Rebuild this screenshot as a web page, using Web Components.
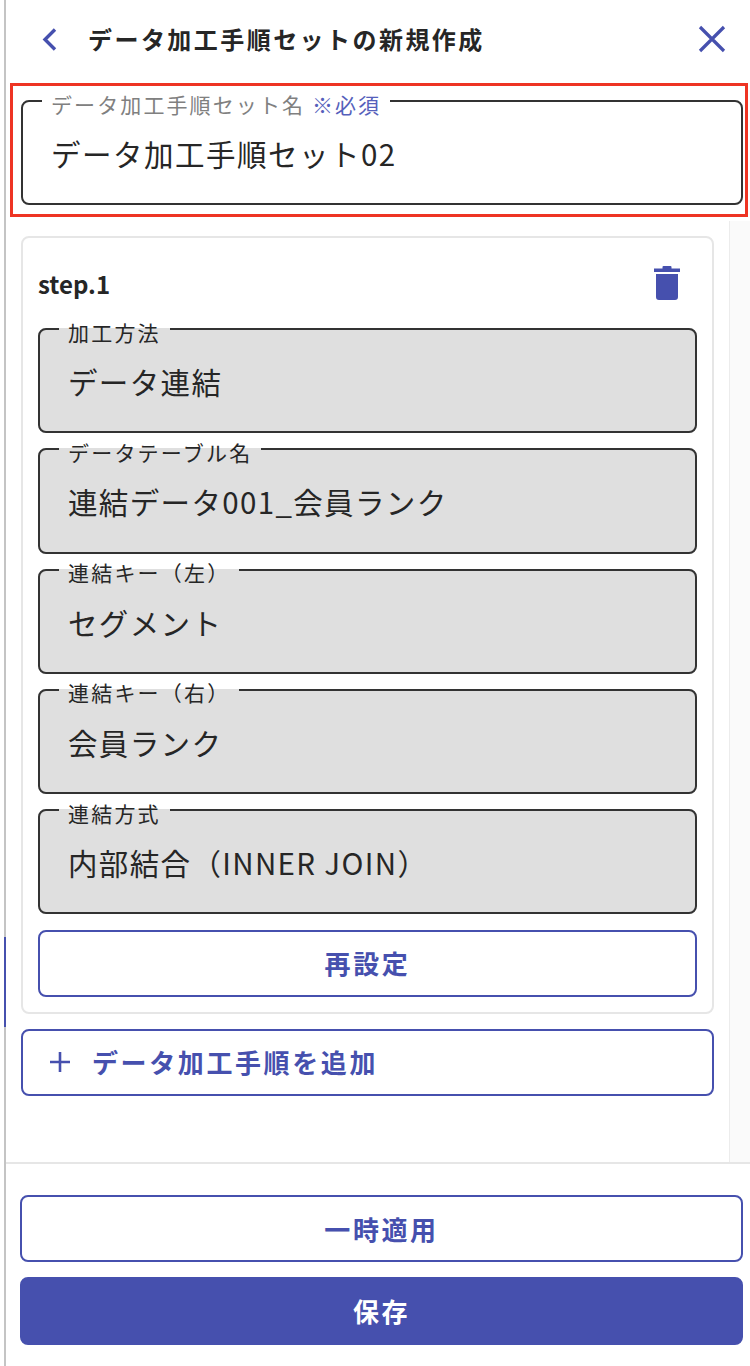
<!DOCTYPE html>
<html lang="ja">
<head>
<meta charset="utf-8">
<title>データ加工手順セットの新規作成</title>
<style>
  html, body { margin: 0; height: 100%; background: #fff; }
  body { font-family: "Noto Sans CJK JP", "Noto Sans", sans-serif; color: #262626; }
</style>
</head>
<body>
<template id="panel-tpl">
  <style>
    :host { display: flex; flex-direction: column; height: 1366px; width: 750px; box-sizing: border-box; overflow: hidden; }
    .edge { position: absolute; left: 4px; top: 0; bottom: 0; width: 1.5px; background: #c4c4c4; }
    .edge i { position: absolute; left: 0; top: 937px; width: 1.5px; height: 90px; background: #4650ae; }
    .head { flex: none; height: 83px; box-sizing: border-box; }
    .body { flex: 1; min-height: 0; display: flex; }
    .scroll { flex: 1; min-width: 0; padding: 19.500px 15px 0 21px; display: flex; flex-direction: column; gap: 15px; }
    .track { flex: none; width: 20px; margin-top: 4px; background: #fafafa; border-left: 1.5px solid #ececec; }
    .foot { flex: none; height: 204px; box-sizing: border-box; margin-left: 5px; border-top: 2px solid #e6e6e6; padding: 31px 7px 0 15px; display: flex; flex-direction: column; gap: 15px; }
    .top { flex: none; padding: 0 2px 0 10px; }
  </style>
  <div class="edge"><i></i></div>
  <div class="head"><slot name="head"></slot></div>
  <div class="top"><slot name="top"></slot></div>
  <div class="body">
    <div class="scroll"><slot></slot></div>
    <div class="track"></div>
  </div>
  <div class="foot"><slot name="foot"></slot></div>
</template>

<template id="head-tpl">
  <style>
    :host { display: flex; align-items: center; height: 78px; padding: 0 24px 0 41px; color: #4650ae; }
    .title { flex: 1; margin-left: 29px; font-size: 24px; font-weight: 700; letter-spacing: 2.450px; color: #262626; white-space: nowrap; line-height: 1; }
    svg { display: block; flex: none; }
  </style>
  <svg width="18" height="24" viewBox="0 0 18 24"><path d="M14 2.500 4 12.500 14 22.500" fill="none" stroke="currentColor" stroke-width="3.400"/></svg>
  <span class="title"><slot></slot></span>
  <svg width="28" height="28" viewBox="0 0 28 28"><path d="M2 2 26 26M26 2 2 26" fill="none" stroke="currentColor" stroke-width="3.200"/></svg>
</template>

<template id="highlight-tpl">
  <style>
    :host { display: block; height: 133.500px; box-sizing: border-box; border: 3px solid #ee3423; padding: 0 2px 0 8px; }
  </style>
  <slot></slot>
</template>

<template id="field-tpl">
  <style>
    :host { display: block; color: #262626; }
    fieldset { margin: 0; height: 119.250px; box-sizing: border-box; border: 2px solid #333; border-radius: 8px; padding: 0 0 0 19px; min-width: 0; }
    :host([disabled]) fieldset { background: #dfdfdf; }
    legend { margin-left: 0; padding: 6.500px 9px 1.500px; font-size: 21px; line-height: 22px; letter-spacing: 2.200px; white-space: nowrap; }
    :host([large]) legend { color: #808080; letter-spacing: 2.100px; }
    .value { margin: 17px 0 0 9px; font-size: 29.500px; line-height: 40px; letter-spacing: 1.350px; white-space: nowrap; }
    :host([large]) .value { letter-spacing: 1.500px; }
  </style>
  <fieldset>
    <legend><slot name="label"></slot></legend>
    <div class="value"><slot></slot></div>
  </fieldset>
</template>

<template id="step-tpl">
  <style>
    :host { display: block; box-sizing: border-box; border: 2px solid #e6e6e6; border-radius: 8px; padding: 14px 15px 15px; }
    .row { display: flex; align-items: center; justify-content: space-between; height: 62px; padding-right: 17px; }
    .name { font-size: 24px; font-weight: 700; color: #262626; }
    svg { display: block; color: #4650ae; }
    .list { display: flex; flex-direction: column; gap: 1px; }
  </style>
  <div class="row">
    <span class="name"><slot name="name"></slot></span>
    <svg width="26" height="34" viewBox="0 0 26 34"><path d="M0 2.500h8.500V1q0-1 1-1h7q1 0 1 1v1.500H26V6H0zM2 8h22v23a3 3 0 0 1-3 3H5a3 3 0 0 1-3-3z" fill="currentColor"/></svg>
  </div>
  <div class="list"><slot></slot></div>
</template>

<template id="btn-tpl">
  <style>
    :host { display: flex; align-items: center; justify-content: center; height: 67px; box-sizing: border-box; border: 2px solid #4650ae; border-radius: 8px; background: #fff; color: #4650ae; font-size: 26px; font-weight: 700; letter-spacing: 2.600px; white-space: nowrap; line-height: 1; }
    :host([solid]) { background: #4650ae; color: #fff; height: 68px; }
    :host([left]) { justify-content: flex-start; padding-left: 26px; }
    :host([spaced]) { margin-top: 14.500px; }
  </style>
  <slot name="icon"></slot>
  <slot></slot>
</template>

<x-panel>
  <x-head slot="head">データ加工手順セットの新規作成</x-head>
  <x-highlight slot="top">
    <x-field large>
      <span slot="label">データ加工手順セット名 <span style="color:#5560bb">※必須</span></span>
      データ加工手順セット02
    </x-field>
  </x-highlight>

  <x-step>
    <span slot="name">step.1</span>
    <x-field disabled><span slot="label">加工方法</span>データ連結</x-field>
    <x-field disabled><span slot="label">データテーブル名</span>連結データ001_会員ランク</x-field>
    <x-field disabled><span slot="label">連結キー（左）</span>セグメント</x-field>
    <x-field disabled><span slot="label">連結キー（右）</span>会員ランク</x-field>
    <x-field disabled><span slot="label">連結方式</span>内部結合（INNER JOIN）</x-field>
    <x-btn spaced>再設定</x-btn>
  </x-step>
  <x-btn left>
    <svg slot="icon" width="22" height="22" viewBox="0 0 22 22" style="display:block;margin-right:21px"><path d="M11 1v20M1 11h20" fill="none" stroke="currentColor" stroke-width="2.600"/></svg>
    データ加工手順を追加
  </x-btn>

  <x-btn slot="foot">一時適用</x-btn>
  <x-btn slot="foot" solid>保存</x-btn>
</x-panel>

<script>
  function define(name, tplId) {
    customElements.define(name, class extends HTMLElement {
      constructor() {
        super();
        this.attachShadow({ mode: "open" }).appendChild(
          document.getElementById(tplId).content.cloneNode(true)
        );
      }
    });
  }
  define("x-panel", "panel-tpl");
  define("x-head", "head-tpl");
  define("x-highlight", "highlight-tpl");
  define("x-field", "field-tpl");
  define("x-step", "step-tpl");
  define("x-btn", "btn-tpl");
</script>
</body>
</html>
